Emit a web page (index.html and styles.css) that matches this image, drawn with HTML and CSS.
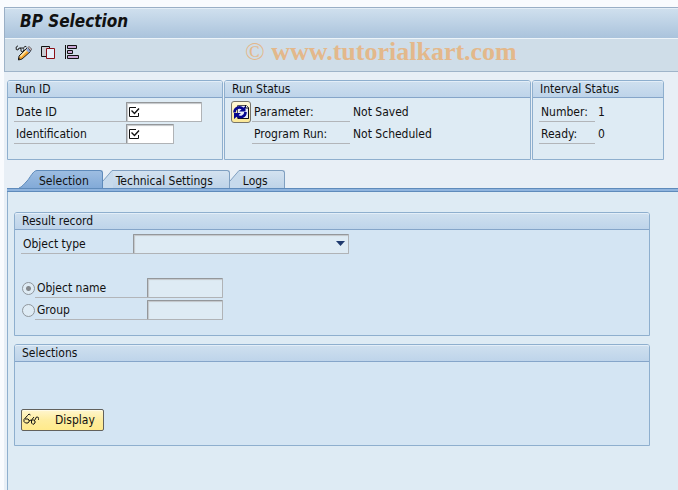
FILE: index.html
```html
<!DOCTYPE html>
<html lang="en">
<head>
  <meta charset="UTF-8">
  <meta name="viewport" content="width=device-width, initial-scale=1.0">
  <title>BP Selection</title>
  <link rel="stylesheet" href="styles.css">
</head>
<body>
  <div class="window">
    <header class="title-bar">
      <h1>BP Selection</h1>
    </header>
    <div class="toolbar">
      <button class="tool-btn" aria-label="Display/Change">
        <svg width="17" height="16" viewBox="0 0 17 16">
          <path d="M4 12l8-8 3 3-8 7-3 1z" fill="#f6a52c"/>
          <path d="M5 11l7-7 1 1-7 7z" fill="#ffe9a8"/>
          <path d="M11 5l2-2 3 3-2 2z" fill="#8fa8dc"/>
          <path d="M13 2.500l1-1 2.500 2.500-1 2z" fill="#f3d9dc" stroke="#333" stroke-width="0.800"/>
          <path d="M4 11l8-8M7 14l8.500-7.500M4 11l-.5 4 3.500-1" fill="none" stroke="#222"/>
          <path d="M3 15l2-1-1.500-1.500z" fill="#111"/>
          <path d="M3 .8L1.200 2v2.500L3 5l1-2 2 .5v2.700l1.700.5 1.300-2L8 3H5M8.500 3L10 1.200l1.500.8" fill="none" stroke="#222"/>
        </svg>
      </button>
      <button class="tool-btn" aria-label="Copy">
        <svg width="16" height="16" viewBox="0 0 16 16">
          <path d="M1.500 1.500h8v10h-8z" fill="#c9ccd2" stroke="#111"/>
          <path d="M6.500 3.500h8v10h-8z" fill="#e6effa" stroke="#8b0f16"/>
        </svg>
      </button>
      <button class="tool-btn" aria-label="Schedule">
        <svg width="16" height="16" viewBox="0 0 16 16">
          <path d="M1.500 0v14" stroke="#111"/>
          <path d="M3.500.5h9v3h-9zM3.500 5.500h5v3h-5zM3.500 10.500h11v3h-11z" fill="#c9a6d4" stroke="#111"/>
        </svg>
      </button>
      <div class="watermark"><span>©</span> www.tutorialkart.com</div>
    </div>

    <div class="status-row">
      <section class="box">
        <h2>Run ID</h2>
        <div class="box-body">
          <div class="row">
            <label class="label" for="date-id">Date ID</label>
            <div class="field">
              <input type="text" id="date-id" class="input wide">
              <svg class="required" width="12" height="12" viewBox="0 0 12 12"><path d="M8 1.500H1.500v9h9V7" fill="none" stroke="#111"/><path d="M3.500 4.500l3 3L11 2.500" fill="none" stroke="#111" stroke-width="1.400"/></svg>
            </div>
          </div>
          <div class="row">
            <label class="label" for="identification">Identification</label>
            <div class="field">
              <input type="text" id="identification" class="input short">
              <svg class="required" width="12" height="12" viewBox="0 0 12 12"><path d="M8 1.500H1.500v9h9V7" fill="none" stroke="#111"/><path d="M3.500 4.500l3 3L11 2.500" fill="none" stroke="#111" stroke-width="1.400"/></svg>
            </div>
          </div>
        </div>
      </section>

      <section class="box">
        <h2>Run Status</h2>
        <div class="box-body with-icon">
          <button class="refresh-btn" aria-label="Refresh status">
            <svg width="16" height="16" viewBox="0 0 16 16">
              <path d="M4.500 1.500h9l2 2v11h-11z" fill="#e9edf5" stroke="#555"/>
              <path d="M12.500 1v3H16M15.500 4v10.500H5" fill="none" stroke="#111"/>
              <path d="M1.500 8.500C1.500 3.500 7 2 10 5" fill="none" stroke="#06068f" stroke-width="2.600"/>
              <path d="M12.500 8C12.500 13 7 14.500 4 11.500" fill="none" stroke="#06068f" stroke-width="2.600"/>
              <path d="M6 7.500h6.500V2zM8 9H1v6z" fill="#06068f"/>
            </svg>
          </button>
          <div class="rows">
            <div class="row">
              <span class="label">Parameter:</span>
              <span class="value">Not Saved</span>
            </div>
            <div class="row">
              <span class="label">Program Run:</span>
              <span class="value">Not Scheduled</span>
            </div>
          </div>
        </div>
      </section>

      <section class="box interval">
        <h2>Interval Status</h2>
        <div class="box-body">
          <div class="row">
            <span class="label">Number:</span>
            <span class="value">1</span>
          </div>
          <div class="row">
            <span class="label">Ready:</span>
            <span class="value">0</span>
          </div>
        </div>
      </section>
    </div>

    <div class="tabs" role="tablist">
      <button class="tab active" role="tab" aria-selected="true">
        <svg width="18" height="18" viewBox="0 0 18 18">
          <defs>
            <linearGradient id="tab-active" x2="0" y2="1"><stop stop-color="#9dbde1"/><stop offset="1" stop-color="#82aad8"/></linearGradient>
          </defs>
          <path d="M0 18C3 17 5 14 8 11S14 0.500 18 0.500V18z" fill="url(#tab-active)"/>
          <path d="M0 18C3 17 5 14 8 11S14 0.500 18 0.500" fill="none" stroke="#5f8bbb"/>
        </svg>
        <span>Selection</span>
      </button>
      <button class="tab" role="tab" aria-selected="false">
        <svg width="10" height="18" viewBox="0 0 10 18">
          <path d="M0 11L9 0.500h1V18H0z" fill="#c7daec"/>
          <path d="M0 11L9 0.500h1" fill="none" stroke="#7f9fc0"/>
        </svg>
        <span>Technical Settings</span>
      </button>
      <button class="tab" role="tab" aria-selected="false">
        <svg width="10" height="18" viewBox="0 0 10 18">
          <path d="M0 11L9 0.500h1V18H0z" fill="#c7daec"/>
          <path d="M0 11L9 0.500h1" fill="none" stroke="#7f9fc0"/>
        </svg>
        <span>Logs</span>
      </button>
    </div>
    <div class="tab-strip"></div>

    <main class="tab-panel">
      <section class="box">
        <h2>Result record</h2>
        <div class="box-body">
          <div class="row">
            <label class="label" for="object-type">Object type</label>
            <div class="field">
              <select id="object-type" class="select"><option></option></select>
              <svg class="arrow" width="9" height="5" viewBox="0 0 9 5"><path d="M0 0h9L4.500 5z" fill="#1f3a6e"/></svg>
            </div>
          </div>
          <div class="row choice first">
            <input type="radio" name="object" id="object-name" class="radio" checked>
            <label class="label" for="object-name">Object name</label>
            <input type="text" class="input wide disabled" aria-label="Object name value">
          </div>
          <div class="row choice">
            <input type="radio" name="object" id="group" class="radio">
            <label class="label" for="group">Group</label>
            <input type="text" class="input wide disabled" aria-label="Group value">
          </div>
        </div>
      </section>

      <section class="box selections">
        <h2>Selections</h2>
        <div class="box-body">
          <button class="display-btn">
            <svg width="16" height="14" viewBox="0 0 16 14">
              <path d="M7.500 2L6 1 4.500 2.500 1 6.500v2L2.500 10H5l1-1.500V7L5 6H2M6 8l2-1M11 4L8.500 7v3l1.500 1.500L12 10V8l-1.500-1H9M11.500 7.500L13.500 4h1.200l1 1.200V7" fill="none" stroke="#111"/>
            </svg>
            <span>Display</span>
          </button>
        </div>
      </section>
    </main>
  </div>
</body>
</html>
```
FILE: styles.css
```css
:root {
  --bg: #e8eff6;
  --panel: #deebf4;
  --group: #d4e5f3;
  --border: #8eafce;
  --line: #b2b5b9;
  --text: #111;
}
* { box-sizing: border-box; }
body {
  margin: 0;
  padding: 7px 0 0 4px;
  min-height: 100vh;
  display: flex;
  background: #f9fbfe;
  color: var(--text);
  font-family: 'DejaVu Sans Condensed', Tahoma, 'DejaVu Sans', sans-serif;
  font-size: 12px;
  line-height: 16px;
}
button, input, select {
  font: inherit;
  color: inherit;
}
h1, h2 { margin: 0; }
.window {
  flex: 1;
  min-width: 0;
  display: flex;
  flex-direction: column;
  background: var(--bg);
}

/* Title and toolbar */
.title-bar {
  height: 31px;
  padding: 3px 15px;
  border-top: 1px solid #9aafc6;
  border-left: 1px solid #9aafc6;
  box-shadow: inset 0 1px #e4eef7;
  background: linear-gradient(#d0e0ee, #aac3dc);
}
.title-bar h1 {
  font-size: 17px;
  line-height: 20px;
  font-style: italic;
}
.toolbar {
  position: relative;
  height: 34px;
  display: flex;
  align-items: center;
  gap: 8px;
  padding: 0 0 3px 10px;
  border: solid #9fb4c9;
  border-width: 0 0 1px 1px;
  box-shadow: inset 0 1px #edf4f9;
  background: #cfdde8;
}
.tool-btn {
  display: flex;
  padding: 0;
  border: none;
  background: none;
}
.watermark {
  position: absolute;
  left: 240px;
  top: 0;
  color: #e3b88b;
  font-family: 'Liberation Serif', serif;
  font-size: 26px;
  font-weight: bold;
  line-height: 28px;
  white-space: nowrap;
}
.watermark span { font-weight: normal; }

/* Group boxes */
.status-row {
  display: grid;
  grid-template-columns: 216fr 307fr 132fr;
  gap: 1px;
  margin: 8px 14px 0 3px;
}
.box {
  border: 1px solid var(--border);
  border-radius: 3px 3px 0 0;
  background: var(--panel);
}
.box h2 {
  height: 17px;
  padding-left: 7px;
  border-bottom: 1px solid #85a5c9;
  border-radius: 2px 2px 0 0;
  box-shadow: inset 0 1px #e3eef8;
  background: linear-gradient(#cfe0ef, #bed4ea);
  font-size: 12px;
  font-weight: normal;
  line-height: 16px;
}
.box-body { padding: 4px 6px 13px; }
.row {
  display: flex;
  height: 20px;
  margin-bottom: 2px;
}
.label {
  width: 112px;
  height: 20px;
  padding-left: 2px;
  border-bottom: 1px solid var(--line);
  line-height: 21px;
}
.value {
  padding-left: 3px;
  line-height: 21px;
}
.with-icon {
  display: flex;
  align-items: flex-start;
  gap: 1px;
}
.with-icon .label { width: 98px; }
.interval .label { width: 56px; }

/* Controls */
.field {
  position: relative;
  display: flex;
}
.input, .select {
  height: 20px;
  margin: 0;
  padding: 0 4px;
  border: 1px solid #b0b3b6;
  border-top-color: #94979a;
  border-left-color: #94979a;
  border-radius: 1px;
  box-shadow: inset 1px 1px 1px #c3c6c9;
  background: #fff;
}
.wide { width: 76px; }
.short { width: 48px; }
.input.disabled, .select { background: var(--panel); }
.select {
  width: 216px;
  appearance: none;
}
.required {
  position: absolute;
  left: 2px;
  top: 4px;
}
.arrow {
  position: absolute;
  right: 4px;
  top: 7px;
}
.radio {
  appearance: none;
  width: 13px;
  height: 13px;
  margin: 4px 0 0 1px;
  border: 1px solid #8f969c;
  border-radius: 50%;
  background: var(--panel);
}
.radio:checked {
  background: radial-gradient(circle, #85898d 2px, var(--panel) 3px);
}
.refresh-btn {
  display: flex;
  align-items: center;
  justify-content: center;
  width: 20px;
  height: 22px;
  margin-top: -1px;
  padding: 0;
  border: 1px solid #77746a;
  border-radius: 3px;
  background: linear-gradient(#fff9d8, #fbe795);
}
.display-btn {
  display: flex;
  align-items: center;
  gap: 16px;
  width: 83px;
  height: 22px;
  padding: 0 1px;
  border: 1px solid #62615c;
  border-radius: 2px;
  box-shadow: inset 0 1px #fffbe6;
  background: linear-gradient(#fff6cf, #feed9f 50%, #ffea8b);
}

/* Tabs */
.tabs {
  display: flex;
  margin: 10px 0 0 15px;
}
.tab {
  display: flex;
  height: 18px;
  padding: 0;
  border: none;
  background: none;
}
.tab span {
  height: 18px;
  padding: 0 16px 0 3px;
  border-top: 1px solid #7f9fc0;
  border-right: 1px solid #7f9fc0;
  border-radius: 0 3px 0 0;
  background: linear-gradient(#d3e2f0, #bed3e8);
  line-height: 20px;
}
.tab.active span {
  padding: 0 13px 0 2px;
  border-color: #5f8bbb;
  background: linear-gradient(#9dbde1, #82aad8);
}
.tab-strip {
  height: 4px;
  margin-left: 3px;
  border: solid #5f8bbb;
  border-width: 1px 0;
  background: #8fb4de;
}
.tab-panel {
  flex: 1;
  margin-left: 3px;
  padding: 20px 28px 16px 6px;
  border-left: 1px solid #8eafce;
  background: var(--panel);
}
.tab-panel .box {
  margin-bottom: 8px;
  background: var(--group);
}
.choice.first { margin-top: 24px; }
.selections .box-body { padding: 47px 6px 14px; }
```
